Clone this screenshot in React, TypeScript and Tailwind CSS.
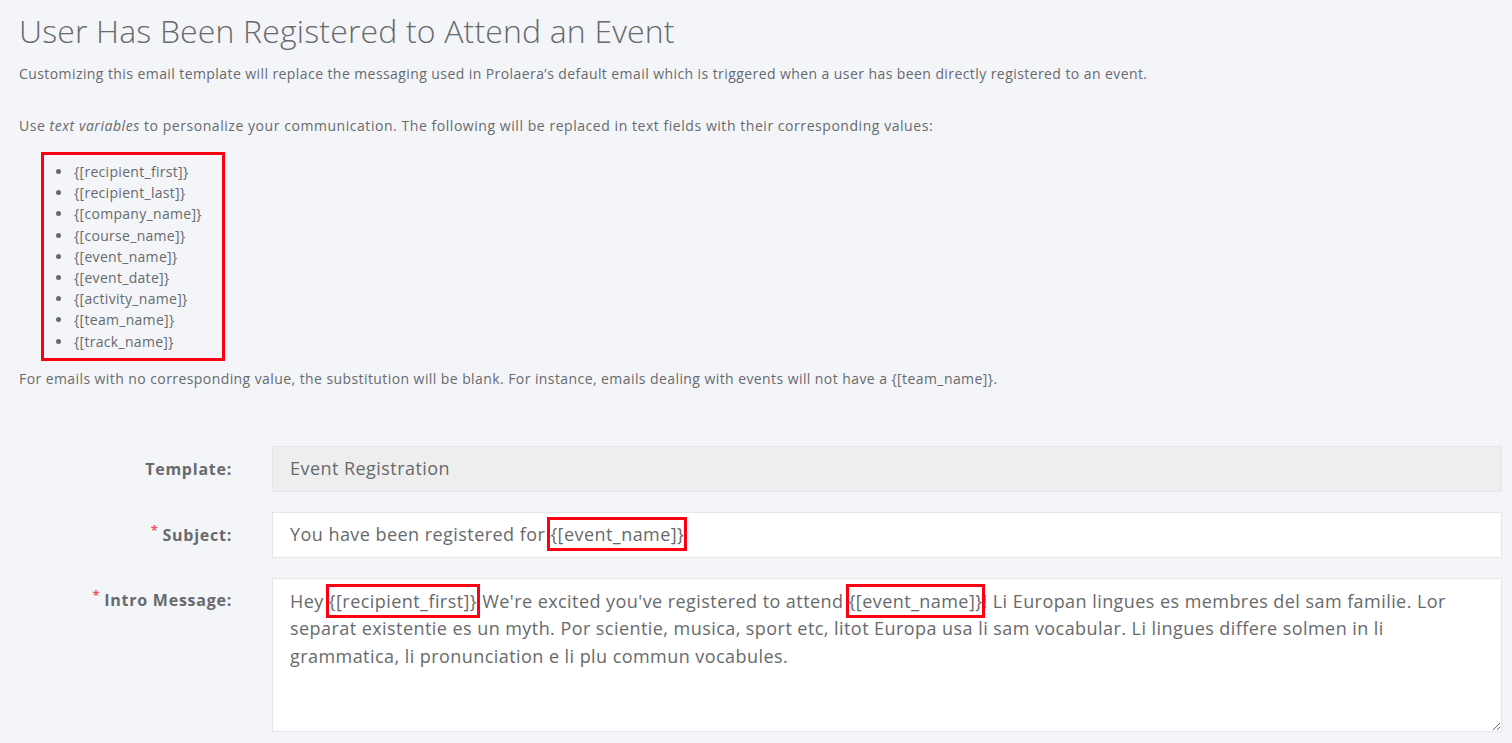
import { type ReactNode } from 'react';

const variables = [
  'recipient_first',
  'recipient_last',
  'company_name',
  'course_name',
  'event_name',
  'event_date',
  'activity_name',
  'team_name',
  'track_name',
];

// Red annotation box drawn round a text variable
function Marked({ children }: { children: ReactNode }) {
  return (
    <span className="py-[2px] outline-[3px] outline-solid outline-[#ff0012] outline-offset-0">{children}</span>
  );
}

function FieldRow({
  label,
  required = false,
  top = false,
  children,
}: {
  label: string;
  required?: boolean;
  top?: boolean;
  children: ReactNode;
}) {
  return (
    <div className={`flex ${top ? 'items-start' : 'items-center'}`}>
      <label
        className={`w-[213px] shrink-0 text-right text-[16px] font-bold tracking-[0.75px] text-[#676a6c] ${top ? 'pt-[10px]' : ''}`}
      >
        {required && <span className="relative -top-[6px] mr-[4px] text-[13px] text-[#ed5565]">*</span>}
        {label}
      </label>
      <div className="ml-[40px] flex-1">{children}</div>
    </div>
  );
}

export default function App() {
  return (
    <div className="min-h-[743px] bg-[#f4f5f9] pl-[19px] pr-[10px] font-['Open_Sans',sans-serif] text-[#676a6c]">
      {/* Header */}
      <h1 className="pt-[10px] text-[32px] font-light leading-[42px] tracking-[0.16px]">
        User Has Been Registered to Attend an Event
      </h1>
      <p className="mt-[12px] text-[14px] leading-[20px] tracking-[0.42px]">
        Customizing this email template will replace the messaging used in Prolaera’s default email which is
        triggered when a user has been directly registered to an event.
      </p>
      <p className="mt-[32px] text-[14px] leading-[20px] tracking-[0.55px]">
        Use <em>text variables</em> to personalize your communication. The following will be replaced in text
        fields with their corresponding values:
      </p>

      {/* Variables list */}
      <ul className="mt-[16px] ml-[22px] w-[184px] list-disc border-[3px] border-[#ff0012] py-[6px] pl-[29px] text-[14px] leading-[21.2px] tracking-[0.3px]">
        {variables.map((v) => (
          <li key={v} className="pl-[1px]">
            {`{[${v}]}`}
          </li>
        ))}
      </ul>
      <p className="mt-[8px] text-[14px] leading-[20px] tracking-[0.42px]">
        For emails with no corresponding value, the substitution will be blank. For instance, emails dealing with
        events will not have a {'{[team_name]}'}.
      </p>

      {/* Form */}
      <div className="mt-[57px] flex flex-col gap-[20px]">
        <FieldRow label="Template:">
          <div className="flex h-[46px] items-center border border-[#e5e6e7] bg-[#eeeeee] px-[17px] text-[18px] tracking-[0.45px]">
            Event Registration
          </div>
        </FieldRow>
        <FieldRow label="Subject:" required>
          <div className="flex h-[46px] items-center border border-[#e5e6e7] bg-white px-[17px] text-[18px] tracking-[0.45px]">
            <span className="whitespace-pre">
              You have been registered for <Marked>{'{[event_name]}'}</Marked>
            </span>
          </div>
        </FieldRow>
        <FieldRow label="Intro Message:" required top>
          <div className="h-[154px] resize-y overflow-auto border border-[#e5e6e7] bg-white px-[17px] pt-[9px] text-[18px] leading-[27.5px] tracking-[0.44px]">
            <div className="whitespace-nowrap">
              Hey <Marked>{'{[recipient_first]}'}</Marked> We're excited you've registered to attend{' '}
              <Marked>{'{[event_name]}'}</Marked>!  Li Europan lingues es membres del sam familie. Lor
              <br />
              separat existentie es un myth. Por scientie, musica, sport etc, litot Europa usa li sam vocabular. Li
              lingues differe solmen in li
              <br />
              grammatica, li pronunciation e li plu commun vocabules.
            </div>
          </div>
        </FieldRow>
      </div>
    </div>
  );
}
